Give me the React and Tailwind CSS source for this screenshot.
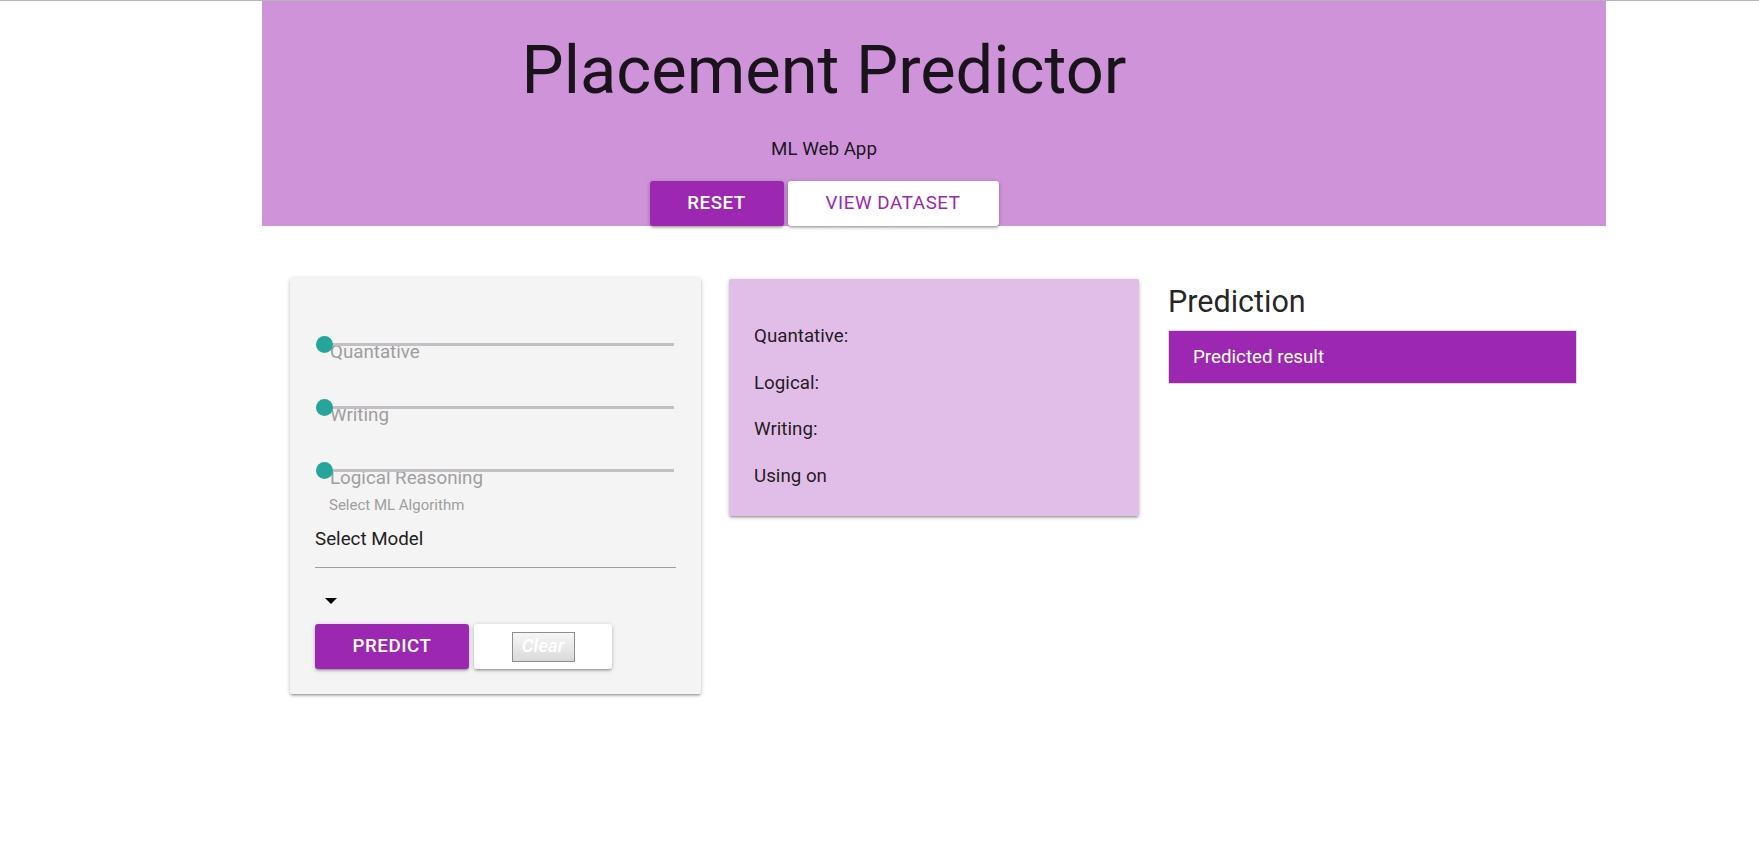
import React from "react";

const sliders = ["Quantative", "Writing", "Logical Reasoning"];
const summary = ["Quantative:", "Logical:", "Writing:", "Using on"];

const raised =
  "shadow-[0_2px_2px_0_rgba(0,0,0,0.14),0_3px_1px_-2px_rgba(0,0,0,0.12),0_1px_5px_0_rgba(0,0,0,0.2)]";

function Slider({ label }) {
  return (
    <div className="relative pt-[35px]">
      {/* track + thumb */}
      <div className="absolute left-px right-[2px] top-[40px] h-[3px] bg-[#c2c0c2]" />
      <div className="absolute left-px top-[33px] w-[17px] h-[17px] rounded-full bg-[#26a69a]" />
      <div className="pl-[15px] leading-[28px] text-[#9e9e9e]">{label}</div>
    </div>
  );
}

export default function App() {
  return (
    <div className="min-h-[856px] bg-white border-t border-[#b5b5b5] font-['Roboto',sans-serif] text-[18.75px] text-black/[0.87]">
      {/* Header */}
      <div className="ml-[262px] w-[1344px] h-[225px] bg-[#ce93d8]">
        <div className="w-[1124px] text-center">
          <h1 className="pt-[31px] text-[66.8px] leading-[76px] font-normal">Placement Predictor</h1>
          <p className="mt-[27px] leading-[28px]">ML Web App</p>
          <div className="mt-[18px] flex justify-center gap-[4px]">
            <button className={`w-[134px] h-[45px] rounded-[3px] bg-[#9c27b0] text-white font-medium uppercase tracking-[0.5px] ${raised}`}>
              Reset
            </button>
            <button className={`w-[211px] h-[45px] rounded-[3px] bg-white text-[#9c27b0] uppercase tracking-[0.6px] ${raised}`}>
              View Dataset
            </button>
          </div>
        </div>
      </div>

      {/* Body */}
      <div className="mt-[52px] pl-[290px] flex items-start">
        {/* Inputs */}
        <div className={`w-[411px] mr-[28px] bg-[#f4f4f4] px-[25px] pt-[25px] pb-[25px] rounded-[2px] ${raised}`}>
          {sliders.map((s) => (
            <Slider key={s} label={s} />
          ))}
          <div className="mt-[2px] pl-[14px] text-[15px] leading-[22px] text-[#9e9e9e]">Select ML Algorithm</div>
          <div className="mt-[9px] pb-[14px] leading-[28px] border-b border-[#9e9e9e] text-[#212121]">Select Model</div>
          <div className="mt-[30px] ml-[10px] h-[6px]">
            <svg width="12" height="6" viewBox="0 0 12 6" className="block">
              <path d="M0 0h12L6 6z" fill="#000" />
            </svg>
          </div>
          <div className="mt-[20px] flex gap-[5px]">
            <button className={`w-[154px] h-[45px] rounded-[3px] bg-[#9c27b0] text-white font-medium uppercase tracking-[0.5px] ${raised}`}>
              Predict
            </button>
            <div className={`w-[138px] h-[45px] rounded-[3px] bg-white flex items-center justify-center ${raised}`}>
              <span className="w-[63px] h-[30px] border border-[#8e8e8e] bg-linear-to-b from-[#f7f7f7] to-[#d9d9d9] flex items-center justify-center italic font-medium text-white leading-none">
                Clear
              </span>
            </div>
          </div>
        </div>

        {/* Summary */}
        <div className={`mt-px w-[410px] mr-[29px] bg-[#e1bee7] px-[25px] pt-[43px] pb-[26px] rounded-[2px] flex flex-col gap-[18.7px] ${raised}`}>
          {summary.map((t) => (
            <p key={t} className="leading-[28px]">{t}</p>
          ))}
        </div>

        {/* Prediction */}
        <div className="w-[409px]">
          <h5 className="mt-[7px] text-[30.5px] leading-[33px] text-black/[0.87]">Prediction</h5>
          <div className="mt-[12px] h-[54px] bg-[#9c27b0] border border-[#e6d3ea] flex items-center px-[24px] text-white">
            Predicted result
          </div>
        </div>
      </div>
    </div>
  );
}
